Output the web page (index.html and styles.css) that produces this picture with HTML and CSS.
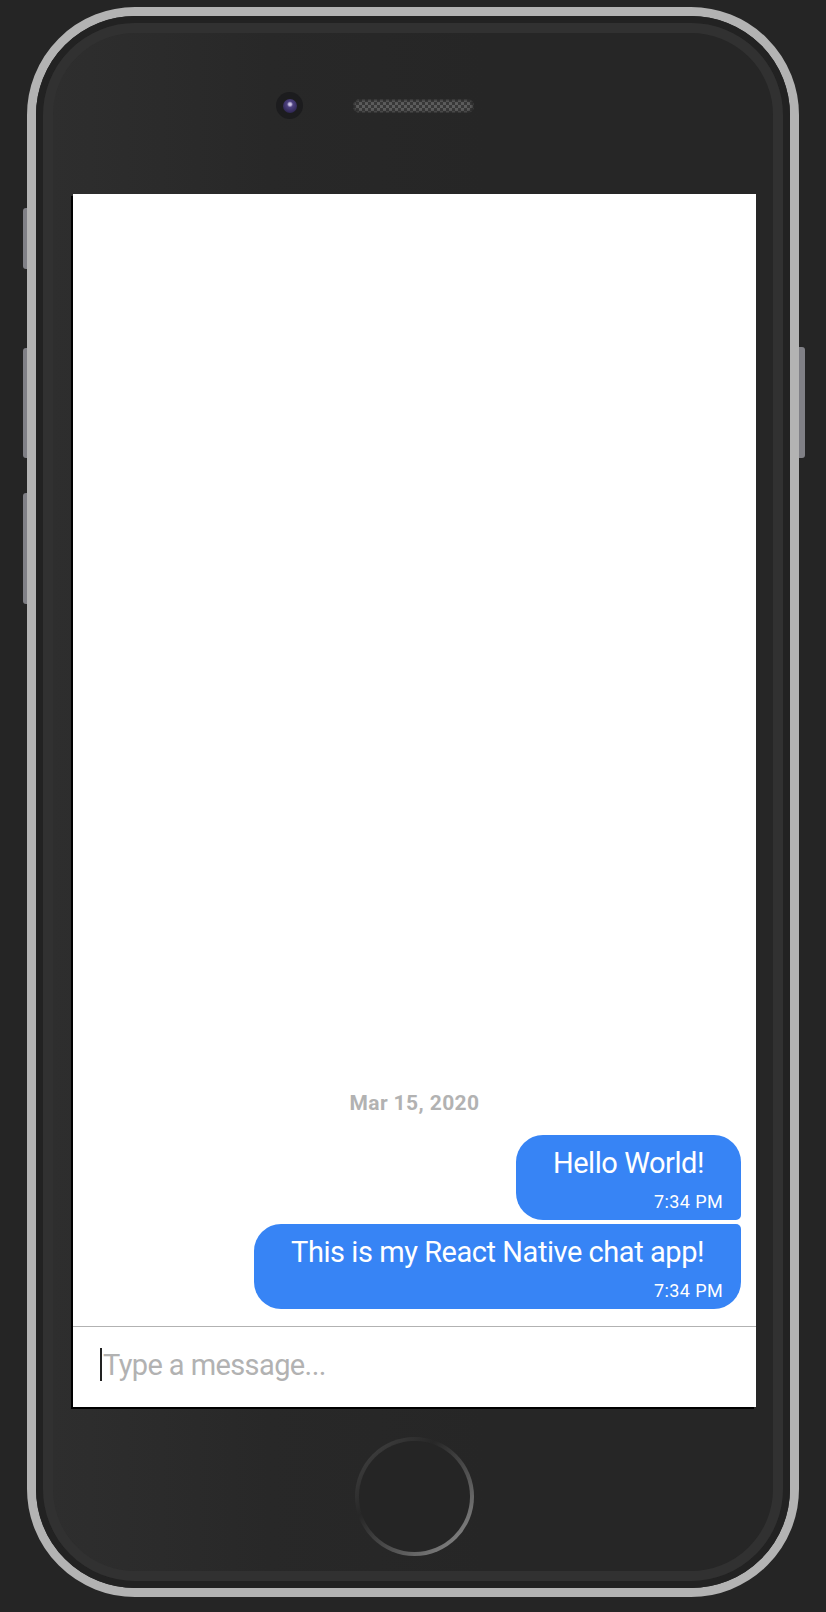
FILE: index.html
```html
<!DOCTYPE html>
<html lang="en">
<head>
<meta charset="utf-8">
<title>Chat</title>
<link rel="stylesheet" href="styles.css">
</head>
<body>
<div class="phone">
  <div class="side-btn side-btn-mute"></div>
  <div class="side-btn side-btn-up"></div>
  <div class="side-btn side-btn-down"></div>
  <div class="side-btn side-btn-power"></div>
  <div class="bezel">
    <div class="face">
      <div class="top-bar">
        <div class="camera"><div class="lens"></div></div>
        <div class="speaker"></div>
      </div>
      <div class="screen">
        <div class="chat">
          <div class="day">Mar 15, 2020</div>
          <div class="bubble bubble-first">
            <div class="msg-text">Hello World!</div>
            <div class="msg-time">7:34 PM</div>
          </div>
          <div class="bubble bubble-last">
            <div class="msg-text">This is my React Native chat app!</div>
            <div class="msg-time">7:34 PM</div>
          </div>
        </div>
        <div class="composer">
          <div class="cursor"></div>
          <div class="placeholder">Type a message...</div>
        </div>
      </div>
      <div class="bottom-bar">
        <div class="home-btn"><div class="home-inner"></div></div>
      </div>
    </div>
  </div>
</div>
</body>
</html>
```
FILE: styles.css
```css
* { box-sizing: border-box; }
html, body { margin: 0; }
body {
  background: #252525;
  padding: 7px 0 0 27px;
  height: 1612px;
  overflow: hidden;
  font-family: Roboto, "Liberation Sans", sans-serif;
}
.phone {
  position: relative;
  width: 772px;
  height: 1590px;
  border: 9px solid #b3b3b3;
  border-radius: 108px;
}
.side-btn {
  position: absolute;
  background: #808086;
}
.side-btn-mute { left: -13px; top: 192px; width: 4px; height: 61px; border-radius: 3px 0 0 3px; }
.side-btn-up { left: -13px; top: 332px; width: 4px; height: 110px; border-radius: 3px 0 0 3px; }
.side-btn-down { left: -13px; top: 477px; width: 4px; height: 111px; border-radius: 3px 0 0 3px; }
.side-btn-power { right: -15px; top: 331px; width: 6px; height: 111px; border-radius: 0 3px 3px 0; }
.bezel {
  height: 100%;
  border: 7px solid #222222;
  border-radius: 99px;
}
.face {
  height: 100%;
  border: 10px solid #313131;
  border-radius: 92px;
  background: linear-gradient(to right, #2e2e2e 0, #282828 30%, #262626 60%);
  display: flex;
  flex-direction: column;
}
.top-bar {
  height: 161px;
  display: flex;
  align-items: flex-start;
  padding: 59px 0 0 223px;
}
.camera {
  width: 27px;
  height: 27px;
  border-radius: 50%;
  background: #1c1c1e;
  display: flex;
  align-items: center;
  justify-content: center;
}
.lens {
  width: 14px;
  height: 14px;
  border-radius: 50%;
  background: radial-gradient(circle at 50% 38%, #d9d4ea 0, #b9b0d6 1.5px, #4d4180 3px, #3b3166 55%, #211b3a 100%);
}
.speaker {
  width: 121px;
  height: 14px;
  margin: 7px 0 0 50px;
  border-radius: 7px;
  background: repeating-conic-gradient(#5c5c5c 0 25%, #383838 0 50%) 0 0 / 6px 6px;
  box-shadow: inset 0 0 3px 1px #262626;
}
.screen {
  width: 683px;
  height: 1213px;
  margin-left: 20px;
  background: #ffffff;
  box-shadow: -2px 2px 0 #000000;
  display: flex;
  flex-direction: column;
}
.chat {
  flex: 1;
  display: flex;
  flex-direction: column;
  justify-content: flex-end;
  padding: 0 15px 17px 0;
}
.day {
  align-self: center;
  margin-left: 15px;
  font-size: 21px;
  line-height: 25px;
  font-weight: 700;
  letter-spacing: 0.4px;
  color: #b2b2b2;
  margin-bottom: 19px;
}
.bubble {
  align-self: flex-end;
  background: #3784f5;
  color: #ffffff;
  border-radius: 27px;
  padding: 10px 0 7px;
  display: flex;
  flex-direction: column;
}
.bubble-first { border-bottom-right-radius: 5px; margin-bottom: 4px; }
.bubble-last { border-top-right-radius: 5px; }
.msg-text {
  font-size: 29px;
  line-height: 36px;
  letter-spacing: -0.45px;
  padding: 0 37px;
  text-align: center;
}
.msg-time {
  align-self: flex-end;
  margin: 10px 18px 0 0;
  font-size: 18px;
  line-height: 22px;
  letter-spacing: 0.4px;
}
.composer {
  height: 81px;
  border-top: 1px solid #b2b2b2;
  display: flex;
  align-items: flex-start;
  padding: 18px 0 0 27px;
}
.cursor {
  width: 2px;
  height: 33px;
  margin-top: 3px;
  background: #222222;
}
.placeholder {
  margin: 2px 0 0 1px;
  font-size: 29px;
  line-height: 36px;
  letter-spacing: -0.6px;
  color: #b2b2b2;
}
.bottom-bar {
  flex: 1;
  display: flex;
  justify-content: center;
  align-items: flex-start;
  padding: 30px 0 0 0;
}
.home-btn {
  width: 119px;
  height: 119px;
  border-radius: 50%;
  padding: 4px;
  margin-left: 2px;
  background: linear-gradient(135deg, #3a3a3a 15%, #272727 35%, #555555 65%, #7a7a7a 85%);
}
.home-inner {
  width: 100%;
  height: 100%;
  border-radius: 50%;
  background: #252525;
}
```
